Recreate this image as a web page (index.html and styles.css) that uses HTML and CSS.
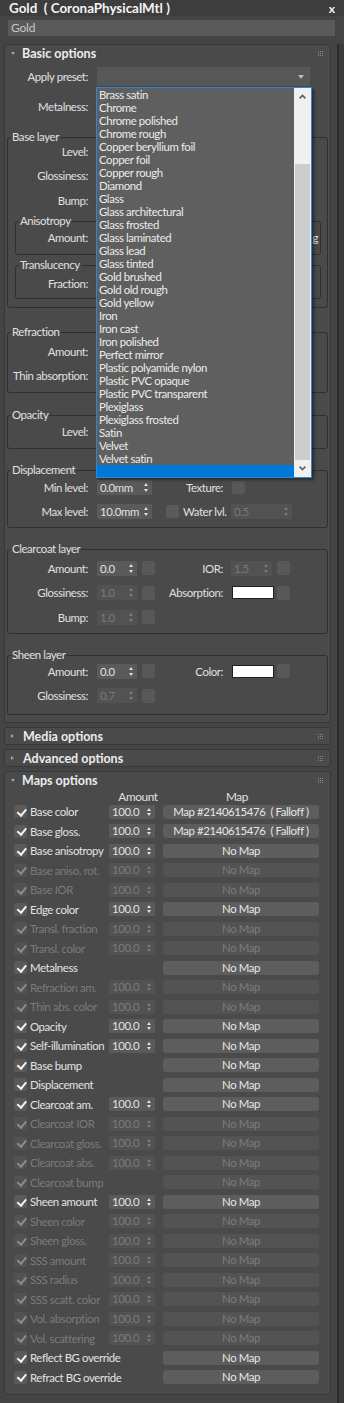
FILE: index.html
```html
<!DOCTYPE html>
<html>
<head>
<meta charset="utf-8">
<title>Gold ( CoronaPhysicalMtl )</title>
<link rel="stylesheet" href="styles.css">
</head>
<body>
<div class="titlebar"><span class="title">Gold  ( CoronaPhysicalMtl )</span><span class="close">x</span></div>
<div class="namebar"><div class="namefield">Gold</div></div>
<div class="main">
  <div class="rollouts">
    <section class="rollout">
      <div class="rh"><span class="tri-d"></span><span class="rname">Basic options</span><span class="grip"></span></div>
      <div class="rb rb-basic">
        <div class="row row-preset">
          <span class="lbl">Apply preset:</span>
          <div class="combo">
            <div class="droplist">
              <div class="items">
                <div>Brass satin</div>
                <div>Chrome</div>
                <div>Chrome polished</div>
                <div>Chrome rough</div>
                <div>Copper beryllium foil</div>
                <div>Copper foil</div>
                <div>Copper rough</div>
                <div>Diamond</div>
                <div>Glass</div>
                <div>Glass architectural</div>
                <div>Glass frosted</div>
                <div>Glass laminated</div>
                <div>Glass lead</div>
                <div>Glass tinted</div>
                <div>Gold brushed</div>
                <div>Gold old rough</div>
                <div>Gold yellow</div>
                <div>Iron</div>
                <div>Iron cast</div>
                <div>Iron polished</div>
                <div>Perfect mirror</div>
                <div>Plastic polyamide nylon</div>
                <div>Plastic PVC opaque</div>
                <div>Plastic PVC transparent</div>
                <div>Plexiglass</div>
                <div>Plexiglass frosted</div>
                <div>Satin</div>
                <div>Velvet</div>
                <div>Velvet satin</div>
                <div class="sel"></div>
              </div>
              <div class="sb">
                <div class="sb-btn"><svg width="7" height="5" viewBox="0 0 7 5"><path d="M0.6 4.4 L3.5 1.4 L6.4 4.4" fill="none" stroke="#606060" stroke-width="1.6"/></svg></div>
                <div class="sb-track"></div>
                <div class="sb-thumb"></div>
                <div class="sb-btn"><svg width="7" height="5" viewBox="0 0 7 5"><path d="M0.6 0.6 L3.5 3.6 L6.4 0.6" fill="none" stroke="#606060" stroke-width="1.6"/></svg></div>
              </div>
            </div>
          </div>
        </div>
        <div class="row row-metal"><span class="lbl">Metalness:</span><span class="spin w40"></span></div>

        <div class="group g-base">
          <div class="gt">Base layer</div>
          <div class="row"><span class="lbl">Level:</span><span class="spin w40"></span></div>
          <div class="row"><span class="lbl">Glossiness:</span><span class="spin w40"></span></div>
          <div class="row"><span class="lbl">Bump:</span><span class="spin w40"></span></div>
          <div class="group sub g-aniso">
            <div class="gt">Anisotropy</div>
            <div class="row"><span class="lbl">Amount:</span><span class="spin w40"></span><span class="hint">g</span></div>
          </div>
          <div class="group sub g-transl">
            <div class="gt">Translucency</div>
            <div class="row"><span class="lbl">Fraction:</span><span class="spin w40"></span></div>
          </div>
        </div>

        <div class="group g-refr">
          <div class="gt">Refraction</div>
          <div class="row"><span class="lbl">Amount:</span><span class="spin w40"></span></div>
          <div class="row"><span class="lbl">Thin absorption:</span><span class="spin w40"></span></div>
        </div>

        <div class="group g-opac">
          <div class="gt">Opacity</div>
          <div class="row"><span class="lbl">Level:</span><span class="spin w40"></span></div>
        </div>

        <div class="group g-disp">
          <div class="gt">Displacement</div>
          <div class="row"><span class="lbl">Min level:</span><span class="spin w55">0.0mm</span><span class="lbl2 w71">Texture:</span><span class="mb sq"></span></div>
          <div class="row"><span class="lbl">Max level:</span><span class="spin w55">10.0mm</span><span class="cb cb-empty"></span><span class="wl">Water lvl.</span><span class="spin dis w61">0.5</span></div>
        </div>

        <div class="group g-clear">
          <div class="gt">Clearcoat layer</div>
          <div class="row"><span class="lbl">Amount:</span><span class="spin w40">0.0</span><span class="mb"></span><span class="lbl2">IOR:</span><span class="spin dis w41">1.5</span><span class="mb"></span></div>
          <div class="row"><span class="lbl">Glossiness:</span><span class="spin dis w40">1.0</span><span class="mb"></span><span class="lbl2">Absorption:</span><span class="swatch"></span><span class="mb mb-s"></span></div>
          <div class="row"><span class="lbl">Bump:</span><span class="spin dis w40">1.0</span><span class="mb"></span></div>
        </div>

        <div class="group g-sheen">
          <div class="gt">Sheen layer</div>
          <div class="row"><span class="lbl">Amount:</span><span class="spin w40">0.0</span><span class="mb"></span><span class="lbl2">Color:</span><span class="swatch"></span><span class="mb mb-s"></span></div>
          <div class="row"><span class="lbl">Glossiness:</span><span class="spin dis w40">0.7</span><span class="mb"></span></div>
        </div>
      </div>
    </section>

    <section class="rollout">
      <div class="rh"><span class="tri-r"></span><span class="rname">Media options</span><span class="grip"></span></div>
    </section>
    <section class="rollout">
      <div class="rh"><span class="tri-r"></span><span class="rname">Advanced options</span><span class="grip"></span></div>
    </section>

    <section class="rollout">
      <div class="rh"><span class="tri-d"></span><span class="rname">Maps options</span><span class="grip"></span></div>
      <div class="rb rb-maps">
        <div class="mhead"><span class="mh-amt">Amount</span><span class="mh-map">Map</span></div>
        <div class="mrow"><span class="cb on"></span><span class="mlbl">Base color</span><span class="spin w46">100.0</span><span class="mapbtn">Map #2140615476  ( Falloff )</span></div>
        <div class="mrow"><span class="cb on"></span><span class="mlbl">Base gloss.</span><span class="spin w46">100.0</span><span class="mapbtn">Map #2140615476  ( Falloff )</span></div>
        <div class="mrow"><span class="cb on"></span><span class="mlbl">Base anisotropy</span><span class="spin w46">100.0</span><span class="mapbtn">No Map</span></div>
        <div class="mrow dis"><span class="cb on"></span><span class="mlbl">Base aniso. rot.</span><span class="spin w46">100.0</span><span class="mapbtn">No Map</span></div>
        <div class="mrow dis"><span class="cb on"></span><span class="mlbl">Base IOR</span><span class="spin w46">100.0</span><span class="mapbtn">No Map</span></div>
        <div class="mrow"><span class="cb on"></span><span class="mlbl">Edge color</span><span class="spin w46">100.0</span><span class="mapbtn">No Map</span></div>
        <div class="mrow dis"><span class="cb on"></span><span class="mlbl">Transl. fraction</span><span class="spin w46">100.0</span><span class="mapbtn">No Map</span></div>
        <div class="mrow dis"><span class="cb on"></span><span class="mlbl">Transl. color</span><span class="spin w46">100.0</span><span class="mapbtn">No Map</span></div>
        <div class="mrow"><span class="cb on"></span><span class="mlbl">Metalness</span><span class="nospin"></span><span class="mapbtn">No Map</span></div>
        <div class="mrow dis"><span class="cb on"></span><span class="mlbl">Refraction am.</span><span class="spin w46">100.0</span><span class="mapbtn">No Map</span></div>
        <div class="mrow dis"><span class="cb on"></span><span class="mlbl">Thin abs. color</span><span class="spin w46">100.0</span><span class="mapbtn">No Map</span></div>
        <div class="mrow"><span class="cb on"></span><span class="mlbl">Opacity</span><span class="spin w46">100.0</span><span class="mapbtn">No Map</span></div>
        <div class="mrow"><span class="cb on"></span><span class="mlbl">Self-illumination</span><span class="spin w46">100.0</span><span class="mapbtn">No Map</span></div>
        <div class="mrow"><span class="cb on"></span><span class="mlbl">Base bump</span><span class="nospin"></span><span class="mapbtn">No Map</span></div>
        <div class="mrow"><span class="cb on"></span><span class="mlbl">Displacement</span><span class="nospin"></span><span class="mapbtn">No Map</span></div>
        <div class="mrow"><span class="cb on"></span><span class="mlbl">Clearcoat am.</span><span class="spin w46">100.0</span><span class="mapbtn">No Map</span></div>
        <div class="mrow dis"><span class="cb on"></span><span class="mlbl">Clearcoat IOR</span><span class="spin w46">100.0</span><span class="mapbtn">No Map</span></div>
        <div class="mrow dis"><span class="cb on"></span><span class="mlbl">Clearcoat gloss.</span><span class="spin w46">100.0</span><span class="mapbtn">No Map</span></div>
        <div class="mrow dis"><span class="cb on"></span><span class="mlbl">Clearcoat abs.</span><span class="spin w46">100.0</span><span class="mapbtn">No Map</span></div>
        <div class="mrow dis"><span class="cb on"></span><span class="mlbl">Clearcoat bump</span><span class="nospin"></span><span class="mapbtn">No Map</span></div>
        <div class="mrow"><span class="cb on"></span><span class="mlbl">Sheen amount</span><span class="spin w46">100.0</span><span class="mapbtn">No Map</span></div>
        <div class="mrow dis"><span class="cb on"></span><span class="mlbl">Sheen color</span><span class="spin w46">100.0</span><span class="mapbtn">No Map</span></div>
        <div class="mrow dis"><span class="cb on"></span><span class="mlbl">Sheen gloss.</span><span class="spin w46">100.0</span><span class="mapbtn">No Map</span></div>
        <div class="mrow dis"><span class="cb on"></span><span class="mlbl">SSS amount</span><span class="spin w46">100.0</span><span class="mapbtn">No Map</span></div>
        <div class="mrow dis"><span class="cb on"></span><span class="mlbl">SSS radius</span><span class="spin w46">100.0</span><span class="mapbtn">No Map</span></div>
        <div class="mrow dis"><span class="cb on"></span><span class="mlbl">SSS scatt. color</span><span class="spin w46">100.0</span><span class="mapbtn">No Map</span></div>
        <div class="mrow dis"><span class="cb on"></span><span class="mlbl">Vol. absorption</span><span class="spin w46">100.0</span><span class="mapbtn">No Map</span></div>
        <div class="mrow dis"><span class="cb on"></span><span class="mlbl">Vol. scattering</span><span class="spin w46">100.0</span><span class="mapbtn">No Map</span></div>
        <div class="mrow"><span class="cb on"></span><span class="mlbl wide">Reflect BG override</span><span class="mapbtn">No Map</span></div>
        <div class="mrow"><span class="cb on"></span><span class="mlbl wide">Refract BG override</span><span class="mapbtn">No Map</span></div>
      </div>
    </section>
  </div>
  <div class="side"></div>
</div>
</body>
</html>
```

FILE: styles.css
```css
* { box-sizing: border-box; }
html, body { margin: 0; padding: 0; }
body {
  background: #444444;
  font-family: Lato, "Liberation Sans", Arial, sans-serif;
  font-size: 11.4px;
  letter-spacing: -0.4px;
  color: #e0e0e0;
  width: 344px;
  height: 1403px;
  overflow: hidden;
}

/* title + name */
.titlebar {
  height: 16px;
  display: flex;
  align-items: center;
  justify-content: space-between;
  padding: 0 9px;
  background: #3d3d3d;
  font-weight: 700;
  font-size: 13.4px;
  letter-spacing: 0;
  color: #f4f4f4;
  white-space: pre;
}
.close { font-size: 12px; }
.namebar { padding: 4px 9px 0 8px; }
.namefield {
  height: 16px;
  line-height: 16px;
  background: #5a5a5a;
  color: #c8c8c8;
  padding-left: 3px;
  font-size: 12px;
  letter-spacing: -0.2px;
}

.main { display: flex; margin-top: 8px; height: 1359px; }
.rollouts { flex: none; width: 327px; margin-left: 4px; }
.side {
  flex: none;
  width: 13px;
  background: linear-gradient(to right, #444444 0 6px, #2c2c2c 6px 8px, #3a3a3a 8px);
}

/* rollouts */
.rollout {
  background: #4a4a4a;
  border: 1px solid #383838;
  border-radius: 3px;
  margin-bottom: 4px;
}
.rh {
  height: 16px;
  display: flex;
  align-items: center;
  padding: 0 7px 0 6px;
  font-weight: 700;
  font-size: 12.5px;
  letter-spacing: 0;
  color: #ececec;
}
.tri-d {
  width: 0; height: 0;
  border-left: 2.5px solid transparent;
  border-right: 2.5px solid transparent;
  border-top: 3px solid #a3a3a3;
}
.tri-r {
  width: 0; height: 0;
  margin-right: 2px;
  border-top: 2.5px solid transparent;
  border-bottom: 2.5px solid transparent;
  border-left: 3px solid #a3a3a3;
}
.rname { margin-left: 7px; }
.grip {
  margin-left: auto;
  width: 5px;
  height: 5px;
  background: conic-gradient(#8a8a8a 25%, transparent 0) -1px 0 / 2px 2px;
}

.rb-basic { padding-bottom: 7px; }
.rb-maps { padding-bottom: 7px; }

/* basic rows */
.row { height: 24.5px; display: flex; align-items: center; }
.row-preset { height: 19px; margin-top: 6px; }
.row-metal { margin-top: 7.75px; }
.lbl { flex: none; width: 83px; text-align: right; margin-right: 9px; white-space: nowrap; }
.group .lbl { width: 80px; }
.group.sub .lbl { width: 72px; }
.lbl2 { flex: none; width: 68px; text-align: right; margin-right: 8px; white-space: nowrap; }
.lbl2.w71 { width: 71px; margin-right: 9px; }
.wl { flex: none; width: 48px; margin-left: 4px; white-space: nowrap; }
.hint { margin-left: auto; padding-right: 2px; }

/* group boxes */
.group {
  border: 1px solid #303030;
  border-radius: 3px;
  margin-left: 2px;
  margin-right: 2px;
}
.group.sub { margin-left: 7px; margin-right: 6px; }
.gt {
  width: max-content;
  height: 14px;
  line-height: 14px;
  margin: -8px 0 0 3px;
  padding: 0 1px;
  background: #4a4a4a;
  white-space: nowrap;
}
.g-base { margin-top: 18.75px; padding-bottom: 8px; }
.g-base > .gt { margin-bottom: -5px; }
.g-aniso { margin-top: 8.5px; padding-bottom: 4.5px; }
.g-aniso > .gt { margin-bottom: -3px; }
.g-transl { margin-top: 10px; padding-bottom: 2.5px; }
.g-transl > .gt { margin-bottom: -1px; }
.g-refr { margin-top: 24px; padding-bottom: 4px; }
.g-opac { margin-top: 22px; padding-bottom: 4.5px; }
.g-opac > .gt { margin-bottom: -3px; }
.g-disp { margin-top: 21px; padding-bottom: 3px; }
.g-disp > .gt { margin-bottom: -2px; }
.g-clear { margin-top: 21px; padding-bottom: 3.5px; }
.g-sheen { margin-top: 21px; padding-bottom: 6px; }
.g-sheen > .gt { margin-bottom: -3px; }

/* combo + dropdown */
.combo {
  position: relative;
  flex: none;
  width: 213px;
  height: 19px;
  background: #575757;
}
.combo::after {
  content: "";
  position: absolute;
  right: 6px;
  top: 8px;
  border-left: 3px solid transparent;
  border-right: 3px solid transparent;
  border-top: 4px solid #bdbdbd;
}
.droplist {
  position: absolute;
  left: -1px;
  top: 20px;
  width: 216px;
  height: 391px;
  border: 1px solid #2e86d1;
  background: #5f5f5f;
  display: flex;
  box-shadow: 2px 2px 3px rgba(0, 0, 0, 0.45);
  z-index: 5;
}
.items { flex: 1; overflow: hidden; }
.items div {
  height: 13px;
  line-height: 13px;
  padding-left: 2px;
  color: #ebebeb;
  white-space: nowrap;
}
.items .sel { background: #0078d7; height: 12px; }
.sb {
  flex: none;
  width: 17px;
  background: #f0f0f0;
  display: flex;
  flex-direction: column;
}
.sb-btn { height: 17px; display: flex; align-items: center; justify-content: center; flex: none; }
.sb-track { height: 59px; flex: none; }
.sb-thumb { flex: 1; margin: 0 1px; background: #cdcdcd; }

/* spinners */
.spin {
  position: relative;
  flex: none;
  height: 15px;
  line-height: 15px;
  padding-left: 3px;
  background: #5a5a5a;
  color: #e0e0e0;
  white-space: nowrap;
}
.spin::before, .spin::after {
  content: "";
  position: absolute;
  right: 4px;
  border-left: 2.5px solid transparent;
  border-right: 2.5px solid transparent;
}
.spin::before { top: 3px; border-bottom: 3px solid currentColor; }
.spin::after { bottom: 3px; border-top: 3px solid currentColor; }
.spin.dis, .dis .spin { background: #525252; color: #7a7a7a; }
.w40 { width: 40px; }
.w41 { width: 41px; }
.w46 { width: 46px; }
.w55 { width: 55px; }
.w61 { width: 61px; }

.mb {
  flex: none;
  width: 13px;
  height: 14px;
  margin-left: 5px;
  background: #585858;
  border-radius: 2px;
}
.mb.sq { margin-left: 0; height: 13px; }
.mb.mb-s { margin-left: 3px; }
.swatch {
  flex: none;
  width: 42px;
  height: 13px;
  margin-left: 1px;
  background: #ffffff;
  border: 1px solid #1e1e1e;
}

/* checkboxes */
.cb {
  position: relative;
  flex: none;
  width: 13px;
  height: 13px;
  background: #5a5a5a;
  border-radius: 2px;
}
.cb-empty { margin-left: 14px; }
.cb.on::after {
  content: "";
  position: absolute;
  left: 4.5px;
  top: 1.5px;
  width: 3.5px;
  height: 6.5px;
  border-right: 2.4px solid #f4f4f4;
  border-bottom: 2.4px solid #f4f4f4;
  transform: rotate(40deg);
}
.dis .cb { background: #525252; }
.dis .cb.on::after { border-color: #8c8c8c; }

/* maps */
.mhead { height: 10px; line-height: 10px; margin-top: 4px; display: flex; font-size: 11.8px; }
.mh-amt { width: 50px; margin-left: 108px; text-align: center; }
.mh-map { width: 50px; margin-left: 49px; text-align: center; }
.mrow { height: 19.5px; display: flex; align-items: center; padding-left: 9px; }
.mlbl {
  flex: none;
  width: 79px;
  margin-left: 3px;
  white-space: nowrap;
  overflow: hidden;
  color: #e2e2e2;
}
.mlbl.wide { width: 125px; overflow: visible; }
.dis .mlbl { color: #7b7b7b; }
.mrow .spin { height: 14px; line-height: 14px; }
.nospin { flex: none; width: 46px; }
.mapbtn {
  flex: none;
  width: 156px;
  height: 14px;
  line-height: 14px;
  margin-left: 8px;
  background: #5d5d5d;
  border-radius: 3px;
  text-align: center;
  color: #e6e6e6;
  white-space: pre;
}
.dis .mapbtn { background: #535353; color: #7b7b7b; }
```
